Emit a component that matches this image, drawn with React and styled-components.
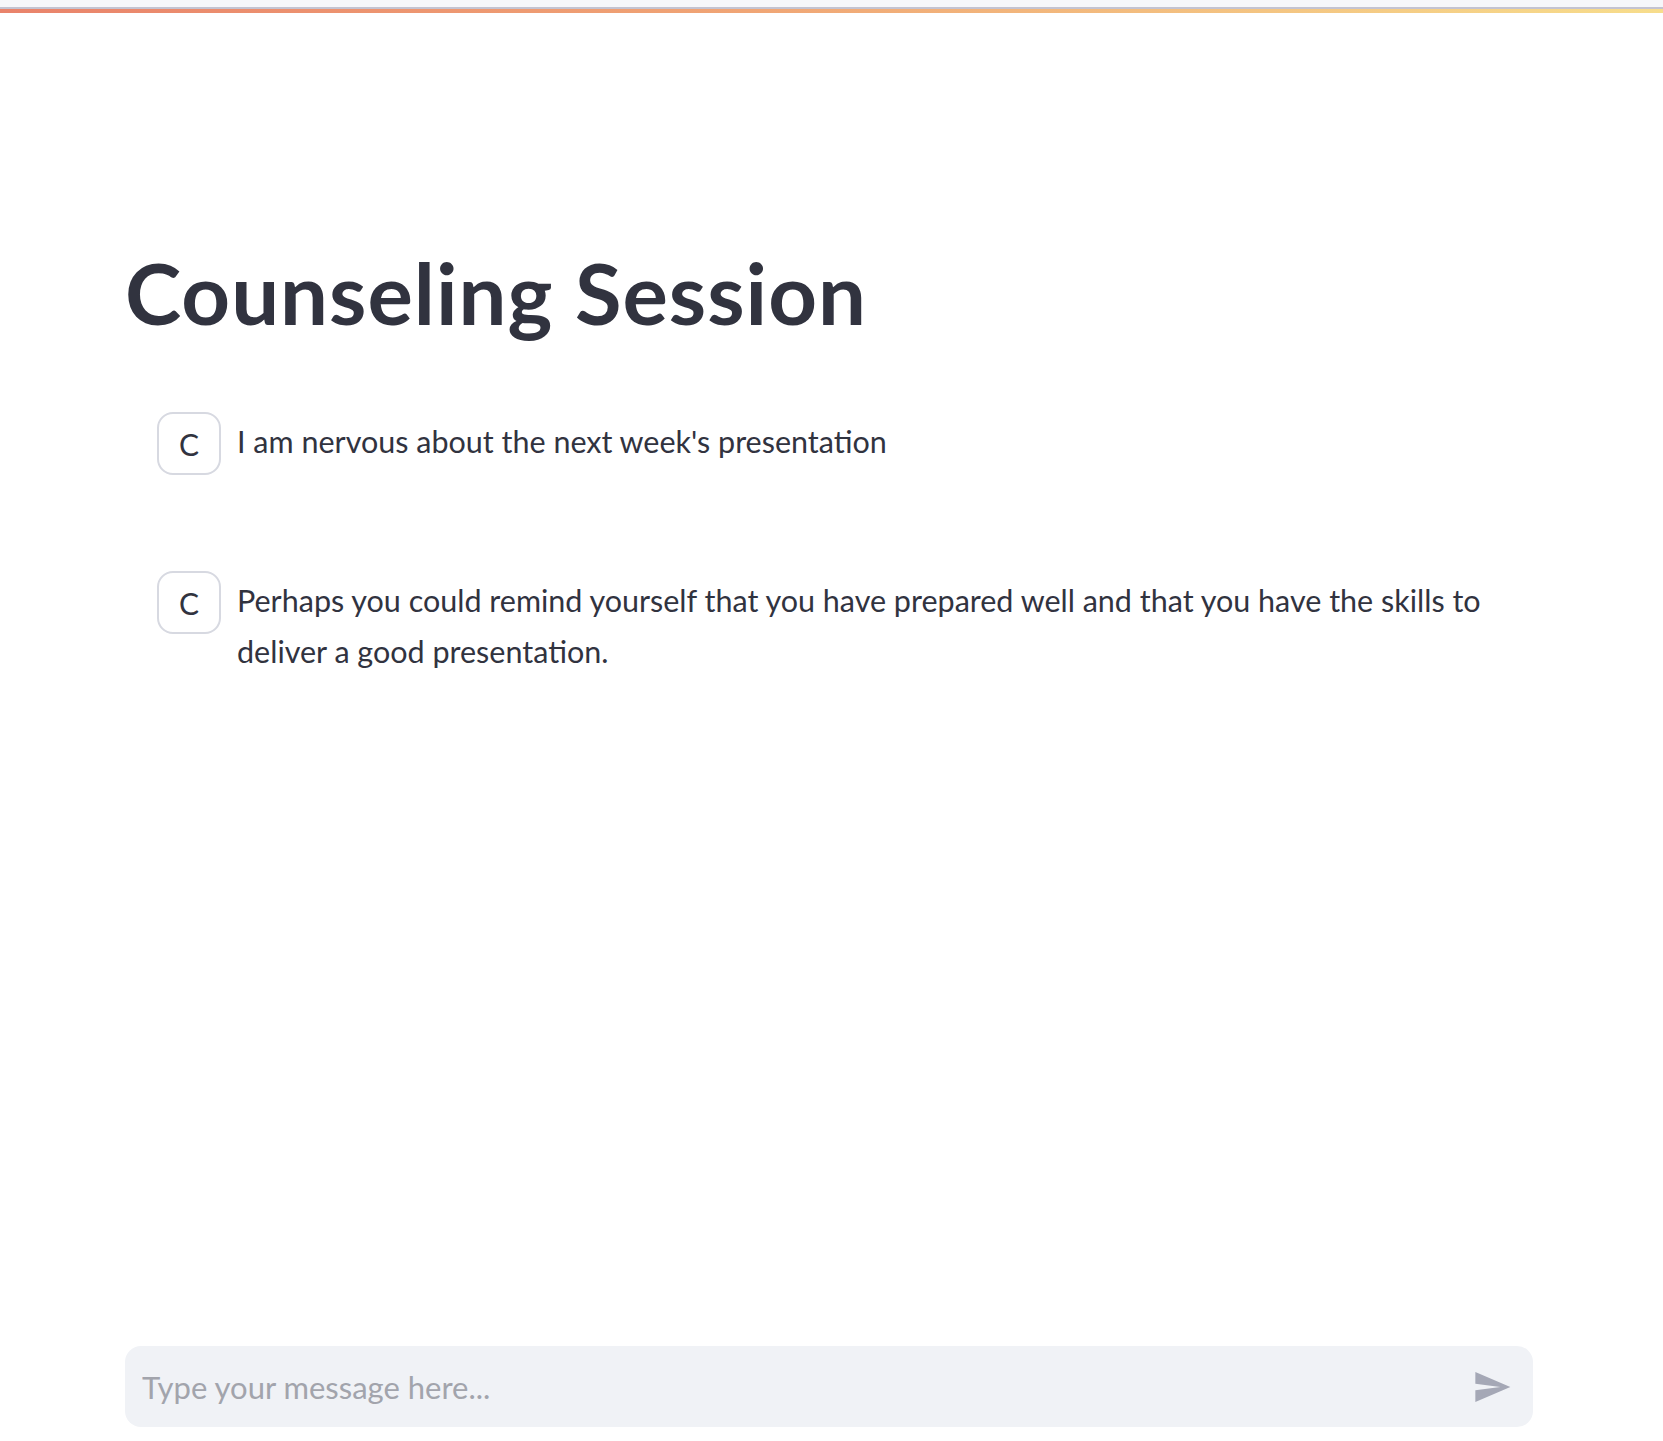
import styled, { createGlobalStyle } from "styled-components"

const GlobalStyle = createGlobalStyle`
    html, body {
        margin: 0;
        padding: 0;
        background: #ffffff;
    }
    body {
        font-family: Lato, sans-serif;
        color: #31333f;
    }
    * {
        box-sizing: border-box;
    }
`

const messages = [
    { id: 1, avatar: "C", text: "I am nervous about the next week's presentation" },
    {
        id: 2,
        avatar: "C",
        text: "Perhaps you could remind yourself that you have prepared well and that you have the skills to deliver a good presentation.",
    },
]

export default function App() {
    return (
        <Page>
            <GlobalStyle />
            <Decoration>
                <div className="band" />
                <div className="rule" />
                <div className="gradient" />
            </Decoration>
            <Main>
                <Title>Counseling Session</Title>
                <MessageList>
                    {messages.map((m) => (
                        <Message key={m.id}>
                            <Avatar>{m.avatar}</Avatar>
                            <MessageText>{m.text}</MessageText>
                        </Message>
                    ))}
                </MessageList>
                <ChatInput>
                    <input type="text" placeholder="Type your message here..." />
                    <SendButton aria-label="Send">
                        <svg viewBox="0 0 24 24" width="40" height="40" fill="currentColor">
                            <path d="M2.01 21L23 12 2.01 3 2 10l15 2-15 2z" />
                        </svg>
                    </SendButton>
                </ChatInput>
            </Main>
        </Page>
    )
}

const Page = styled.div`
    display: flex;
    flex-direction: column;
    min-height: 100vh;
    background: #ffffff;
`

const Decoration = styled.div`
    display: flex;
    flex-direction: column;

    .band {
        height: 7px;
        background: #f6f7fa;
    }

    .rule {
        height: 2px;
        background: #c3c3d1;
    }

    .gradient {
        height: 4px;
        background: linear-gradient(90deg, #e9836b, #f0a575 45%, #f7dd8c);
    }
`

const Main = styled.main`
    flex: 1;
    display: flex;
    flex-direction: column;
    width: 1408px;
    margin-left: 125px;
`

const Title = styled.h1`
    margin: 230px 0 0;
    padding: 0;
    font-family: Lato, sans-serif;
    font-size: 85px;
    font-weight: 700;
    line-height: 98px;
    letter-spacing: 1px;
    color: #31333f;
`

const MessageList = styled.div`
    display: flex;
    flex-direction: column;
    gap: 32px;
    margin-top: 39px;
`

const Message = styled.div`
    display: flex;
    align-items: flex-start;
    gap: 16px;
    padding: 32px;
`

const Avatar = styled.div`
    flex: 0 0 auto;
    width: 64px;
    height: 63px;
    display: flex;
    align-items: center;
    justify-content: center;
    border: 2px solid #d7d9e1;
    border-radius: 16px;
    background: #ffffff;
    font-size: 30px;
    color: #31333f;
`

const MessageText = styled.p`
    margin: 0;
    padding-top: 4px;
    font-size: 30.5px;
    line-height: 51px;
    color: #31333f;
`

const ChatInput = styled.div`
    margin-top: auto;
    margin-bottom: 14px;
    height: 81px;
    display: flex;
    align-items: center;
    border-radius: 16px;
    background: #f0f2f6;
    padding: 0 21px 0 17px;

    input {
        flex: 1;
        border: none;
        outline: none;
        background: transparent;
        font-family: Lato, sans-serif;
        font-size: 31px;
        color: #31333f;
        padding: 0;

        &::placeholder {
            color: #a2a4ac;
        }
    }
`

const SendButton = styled.button`
    display: flex;
    align-items: center;
    justify-content: center;
    border: none;
    background: transparent;
    padding: 0;
    color: #a5a8b6;
    cursor: pointer;
`
